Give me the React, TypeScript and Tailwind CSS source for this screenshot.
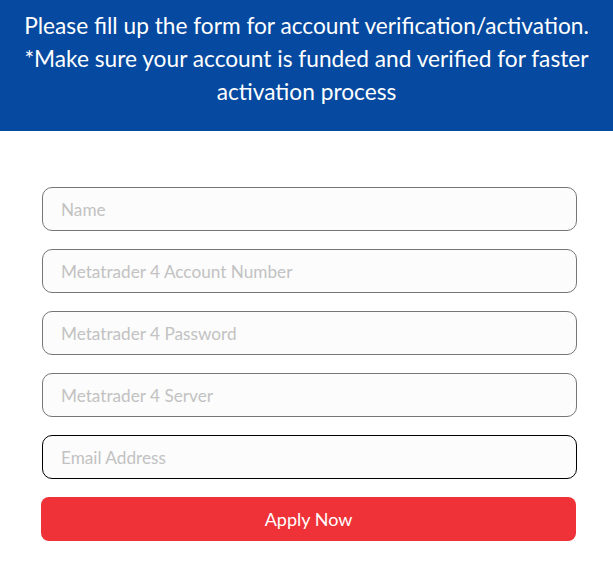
import React from "react";

const fields = [
  "Name",
  "Metatrader 4 Account Number",
  "Metatrader 4 Password",
  "Metatrader 4 Server",
];

export default function App() {
  return (
    <div className="min-h-[566px] w-[613px] bg-white font-['Lato',sans-serif]">
      <div className="bg-[#0549a0] pt-[9px] pb-[23px] px-1 text-center text-[22.7px] leading-[33px] text-white">
        Please fill up the form for account verification/activation.
        <br />
        *Make sure your account is funded and verified for faster
        <br />
        activation process
      </div>
      <form className="ml-[41px] mt-[56px] flex w-[536px] flex-col gap-[18px]">
        {fields.map((f) => (
          <input
            key={f}
            placeholder={f}
            className="ml-[1px] h-[44px] w-[535px] rounded-[10px] border border-[#767676] bg-[#fcfcfc] px-[18px] text-[17.2px] text-[#333] outline-none placeholder:text-[#c2c2c2]"
          />
        ))}
        <input
          placeholder="Email Address"
          className="ml-[1px] h-[44px] w-[535px] rounded-[10px] border border-black bg-[#fcfcfc] px-[18px] text-[17.2px] text-[#333] outline-none placeholder:text-[#c2c2c2]"
        />
        <button
          type="button"
          className="h-[44px] w-[535px] rounded-[8px] bg-[#ee3237] text-[18px] text-white"
        >
          Apply Now
        </button>
      </form>
    </div>
  );
}
